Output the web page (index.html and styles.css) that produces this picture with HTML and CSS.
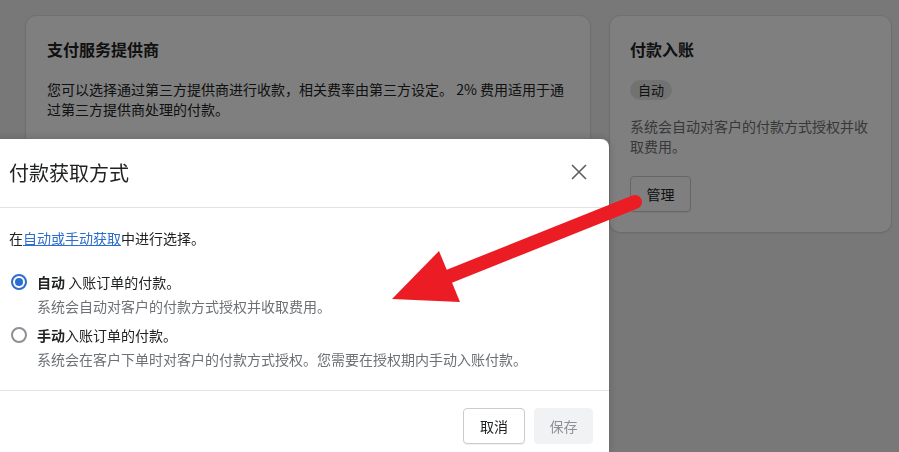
FILE: index.html
```html
<!DOCTYPE html>
<html lang="zh-CN">
<head>
<meta charset="utf-8">
<title>付款获取方式</title>
<link rel="stylesheet" href="styles.css">
</head>
<body>
<main class="page">
  <section class="card card-provider">
    <h2 class="card-title">支付服务提供商</h2>
    <p class="card-text">您可以选择通过第三方提供商进行收款，相关费率由第三方设定。 2% 费用适用于通过第三方提供商处理的付款。</p>
  </section>
  <section class="card card-capture">
    <h2 class="card-title">付款入账</h2>
    <span class="badge">自动</span>
    <p class="card-text card-text-capture">系统会自动对客户的付款方式授权并收取费用。</p>
    <button class="btn">管理</button>
  </section>
</main>

<div class="overlay"></div>

<div class="modal">
  <header class="modal-header">
    <h1 class="modal-title">付款获取方式</h1>
    <button class="close" aria-label="关闭">
      <svg width="16" height="16" viewBox="0 0 16 16"><path d="M1 1 L15 15 M15 1 L1 15" stroke="#5c5f62" stroke-width="1.6" fill="none"/></svg>
    </button>
  </header>
  <div class="modal-body">
    <p class="intro">在<a href="#" class="link">自动或手动获取</a>中进行选择。</p>
    <div class="options">
      <label class="option">
        <span class="radio radio-on"></span>
        <span class="option-text">
          <span class="option-label"><b>自动</b> 入账订单的付款。</span>
          <span class="option-help">系统会自动对客户的付款方式授权并收取费用。</span>
        </span>
      </label>
      <label class="option">
        <span class="radio"></span>
        <span class="option-text">
          <span class="option-label"><b>手动</b>入账订单的付款。</span>
          <span class="option-help">系统会在客户下单时对客户的付款方式授权。您需要在授权期内手动入账付款。</span>
        </span>
      </label>
    </div>
  </div>
  <footer class="modal-footer">
    <button class="btn btn-cancel">取消</button>
    <button class="btn btn-disabled">保存</button>
  </footer>
</div>

<svg class="arrow" width="899" height="452" viewBox="0 0 899 452">
  <line x1="635" y1="202" x2="445" y2="278" stroke="#ec1c24" stroke-width="14" stroke-linecap="round"/>
  <polygon points="392,299 439,251 460,302" fill="#ec1c24"/>
</svg>
</body>
</html>
```

FILE: styles.css
```css
* { box-sizing: border-box; }

html, body {
  margin: 0;
  padding: 0;
  width: 899px;
  height: 452px;
  overflow: hidden;
  background: #f1f1f1;
  font-family: "Noto Sans CJK SC", "Noto Sans", sans-serif;
  color: #202223;
  font-size: 14px;
  line-height: 20px;
}

.page {
  display: grid;
  grid-template-columns: 564px 281px;
  column-gap: 20px;
  align-items: start;
  padding: 16px 0 0 26px;
}

.card {
  background: #ffffff;
  border-radius: 10px;
  box-shadow: 0 0 0 1px rgba(63, 63, 68, 0.05), 0 1px 3px rgba(63, 63, 68, 0.15);
  padding: 21px 20px 20px 21px;
}

.card-provider {
  height: 420px;
}

.card-title {
  margin: 0;
  font-size: 16px;
  line-height: 24px;
  font-weight: 700;
}

.card-text {
  margin: 18px 0 0;
  color: #202223;
}

.card-capture {
  padding: 21px 19px 20px 20px;
}

.badge {
  display: inline-block;
  margin-top: 19px;
  padding: 0 8px;
  height: 20px;
  line-height: 20px;
  border-radius: 10px;
  background: #e4e5e7;
  color: #202223;
  font-size: 13px;
}

.card-text-capture {
  margin-top: 16px;
  color: #6d7175;
}

.btn {
  display: block;
  font-family: inherit;
  font-size: 14px;
  line-height: 20px;
  height: 36px;
  padding: 0;
  white-space: nowrap;
  text-align: center;
  background: #ffffff;
  color: #202223;
  border: 1px solid #c9cccf;
  border-radius: 4px;
  box-shadow: 0 1px 0 rgba(0, 0, 0, 0.05);
}

.card-capture .btn {
  margin-top: 20px;
  width: 61px;
}

.overlay {
  position: fixed;
  inset: 0;
  background: rgba(0, 0, 0, 0.5);
}

.modal {
  position: fixed;
  left: -7px;
  top: 139px;
  width: 616px;
  height: 313px;
  background: #ffffff;
  border-radius: 8px 8px 0 0;
  box-shadow: 0 0 10px rgba(0, 0, 0, 0.2);
}

.modal-header {
  display: flex;
  align-items: center;
  justify-content: space-between;
  height: 69px;
  padding: 0 16px;
  border-bottom: 1px solid #e1e3e5;
}

.modal-title {
  margin: 0;
  font-size: 20px;
  line-height: 28px;
  font-weight: 400;
  color: #202223;
}

.close {
  display: flex;
  align-items: center;
  justify-content: center;
  width: 28px;
  height: 28px;
  margin-top: -2px;
  padding: 0;
  border: 0;
  background: transparent;
}

.modal-body {
  padding: 20px 16px 21px;
  border-bottom: 1px solid #e1e3e5;
}

.intro {
  margin: 0;
}

.link {
  color: #2c6ecb;
  text-decoration: underline;
}

.options {
  display: flex;
  flex-direction: column;
  gap: 9px;
  margin-top: 24px;
}

.option {
  display: flex;
  align-items: flex-start;
}

.radio {
  flex: none;
  width: 16px;
  height: 16px;
  margin: 2px 10px 0 2px;
  border: 2px solid #8c9196;
  border-radius: 50%;
  background: #fff;
  position: relative;
}

.radio-on {
  border-color: #2c6ecb;
}

.radio-on::after {
  content: "";
  position: absolute;
  left: 2px;
  top: 2px;
  width: 8px;
  height: 8px;
  border-radius: 50%;
  background: #2c6ecb;
}

.option-text {
  display: flex;
  flex-direction: column;
  gap: 4px;
}

.option-label b {
  font-weight: 700;
}

.option-help {
  color: #6d7175;
}

.modal-footer {
  display: flex;
  justify-content: flex-end;
  gap: 9px;
  padding: 17px 16px;
}

.btn-cancel {
  width: 62px;
}

.btn-disabled {
  width: 59px;
  background: #f1f2f3;
  border-color: #f1f2f3;
  color: #8c9196;
  box-shadow: none;
}

.arrow {
  position: fixed;
  left: 0;
  top: 0;
  pointer-events: none;
}
```
